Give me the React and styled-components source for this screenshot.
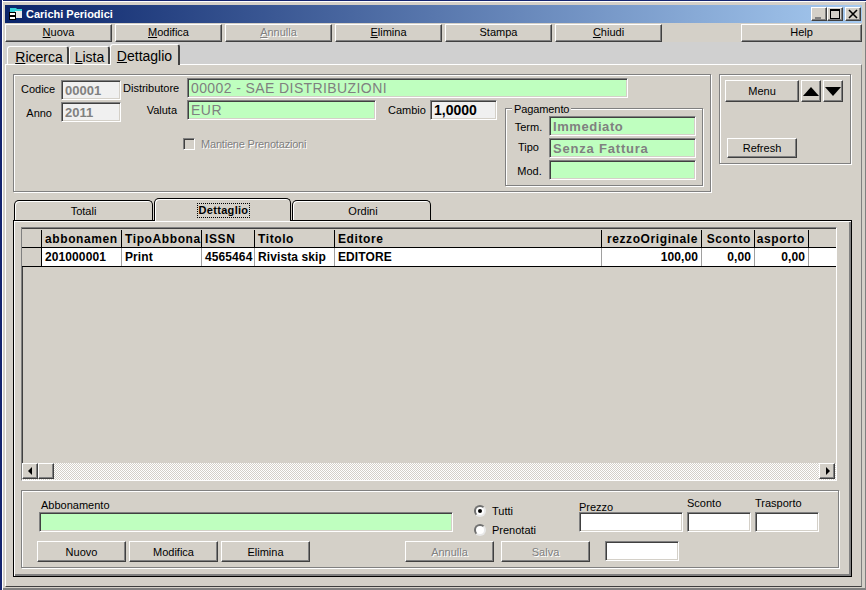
import React from "react";
import styled, { createGlobalStyle, css } from "styled-components";

const GlobalStyle = createGlobalStyle`
  html, body {
    margin: 0;
    padding: 0;
    overflow: hidden;
    background: #d4d0c8;
  }
  * {
    box-sizing: border-box;
  }
`;

const raised = css`
  border-style: solid;
  border-width: 1px;
  border-color: #fff #404040 #404040 #fff;
  box-shadow: inset -1px -1px 0 #808080;
  background: #d4d0c8;
`;

const etched = css`
  border: 1px solid #808080;
  box-shadow: inset 1px 1px 0 #fff, 1px 1px 0 #fff;
`;

const Frame = styled.div`
  width: 866px;
  height: 590px;
  padding: 5px 4px 3px 5px;
  background: #d4d0c8;
  font-family: "Liberation Sans", Arial, sans-serif;
  font-size: 11px;
  color: #000;
  box-shadow: inset 2px 0 0 #14246e, inset 3px 0 0 #fff, inset 0 1px 0 #14246e, inset 0 2px 0 #fff, inset -1px 0 0 #808080, inset 0 -2px 0 #808080;
  display: flex;
  flex-direction: column;
`;

const TitleBar = styled.div`
  height: 18px;
  flex: none;
  display: flex;
  align-items: center;
  padding: 0 1px 0 3px;
  background: linear-gradient(90deg, #0a246a, #a6caf0);
  color: #fff;
  font-weight: bold;
  font-size: 11px;
`;

const TitleText = styled.span`
  margin-left: 2px;
  font-size: 11px;
`;

const WinButtons = styled.div`
  margin-left: auto;
  display: flex;
`;

const WinButton = styled.div`
  ${raised}
  width: 16px;
  height: 14px;
  margin-left: ${(p) => p.$gap || 0}px;
  display: flex;
  align-items: center;
  justify-content: center;
`;

const Toolbar = styled.div`
  flex: none;
  height: 19px;
  padding-top: 1px;
  display: flex;
  gap: 3px;
`;

const ToolButton = styled.div`
  ${raised}
  width: ${(p) => p.$w || 107}px;
  height: 18px;
  padding-bottom: 2px;
  margin-left: ${(p) => p.$push || 0}px;
  display: flex;
  align-items: center;
  justify-content: center;
  ${(p) =>
    p.$off &&
    css`
      color: #808080;
      text-shadow: 1px 1px 0 #fff;
    `}
`;

const PageTabs = styled.div`
  flex: none;
  height: 22px;
  padding-left: 2px;
  background: #d0d0d0;
  display: flex;
  align-items: flex-end;
`;

const PageTab = styled.div`
  width: ${(p) => p.$w}px;
  height: ${(p) => (p.$on ? 21 : 18)}px;
  margin-bottom: ${(p) => (p.$on ? -1 : 0)}px;
  padding: 2px 0 0 ${(p) => p.$pl || 0}px;
  position: relative;
  background: #d4d0c8;
  font-size: 14px;
  border-top: 1px solid #fff;
  border-left: 1px solid #fff;
  border-right: 2px solid #404040;
  border-radius: 3px 3px 0 0;
  display: flex;
  align-items: center;
  justify-content: center;
`;

const Body = styled.div`
  flex: 1;
  border-style: solid;
  border-width: 1px;
  border-color: #fff #808080 #404040 #fff;
  padding: 9px 0 0 7px;
`;

const TopRow = styled.div`
  display: flex;
  align-items: flex-start;
  gap: 8px;
`;

const FilterBox = styled.div`
  ${etched}
  width: 698px;
  height: 118px;
  padding-left: 7px;
  display: flex;
  gap: 2px;
`;

const IdColumn = styled.div`
  width: 100px;
  margin-top: 5px;
  display: grid;
  grid-template-columns: 33px 60px;
  grid-auto-rows: 20px;
  column-gap: 7px;
  row-gap: 2px;
  align-content: start;
`;

const Caption = styled.label`
  width: ${(p) => (p.$w ? `${p.$w}px` : "auto")};
  margin-left: ${(p) => p.$ml || 0}px;
  padding-right: ${(p) => p.$pr || 0}px;
  margin-top: ${(p) => p.$drop || 0}px;
  margin-bottom: ${(p) => p.$lift || 0}px;
  text-align: ${(p) => p.$align || "left"};
  flex: none;
  line-height: 14px;
  align-self: center;
`;

const Sunken = styled.input`
  display: block;
  flex: none;
  width: ${(p) => (p.$w ? `${p.$w}px` : "100%")};
  height: 20px;
  margin: 0 0 0 ${(p) => p.$ml || 0}px;
  padding: 0 0 0 3px;
  outline: none;
  border-style: solid;
  border-width: 1px;
  border-color: #808080 #fff #fff #808080;
  box-shadow: inset 1px 1px 0 #404040, inset -1px -1px 0 #d4d0c8;
  background: ${(p) => (p.$tone === "green" ? "#bfffbf" : p.$tone === "grey" ? "#f0f0f0" : "#fff")};
  color: ${(p) => (p.$dark ? "#000" : "#808080")};
  font-family: "Liberation Sans", Arial, sans-serif;
  font-size: ${(p) => p.$size || 13}px;
  font-weight: ${(p) => (p.$plain ? "normal" : "bold")};
  letter-spacing: ${(p) => p.$ls || 0}px;
`;

const MainColumn = styled.div`
  flex: 1;
  padding-top: 3px;
`;

const FieldRow = styled.div`
  display: flex;
  height: 20px;
`;

const LowerRow = styled.div`
  display: flex;
  align-items: flex-start;
  margin-top: 2px;
`;

const LowerLeft = styled.div`
  width: 382px;
  flex: none;
`;

const CheckRow = styled.div`
  margin: 18px 0 0 60px;
  display: flex;
  align-items: center;
  gap: 6px;
  color: #808080;
  text-shadow: 1px 1px 0 #fff;
  letter-spacing: -0.2px;
`;

const CheckBox = styled.span`
  width: 12px;
  height: 12px;
  border-style: solid;
  border-width: 1px;
  border-color: #808080 #fff #fff #808080;
  box-shadow: inset 1px 1px 0 #404040;
`;

const PayBox = styled.div`
  ${etched}
  position: relative;
  width: 198px;
  height: 78px;
  margin-top: 8px;
  padding: 7px 0 0 0;
  display: grid;
  grid-template-columns: 43px 147px;
  grid-auto-rows: 20px;
  row-gap: 2px;
  align-content: start;
`;

const Legend = styled.span`
  position: absolute;
  top: -6px;
  left: 6px;
  padding: 0 2px;
  background: #d4d0c8;
  line-height: 13px;
  letter-spacing: -0.1px;
`;

const PayLabel = styled.label`
  padding-left: ${(p) => p.$pl ?? 2}px;
  margin-top: ${(p) => p.$drop || 0}px;
  margin-bottom: ${(p) => p.$lift || 0}px;
  text-align: center;
  align-self: center;
`;

const SideBox = styled.div`
  ${etched}
  width: 132px;
  height: 90px;
  padding: 5px 0 0 5px;
`;

const MenuRow = styled.div`
  display: flex;
  gap: 2px;
`;

const ActionButton = styled.div`
  ${raised}
  width: ${(p) => p.$w}px;
  height: ${(p) => p.$h || 20}px;
  margin-left: ${(p) => p.$ml || 0}px;
  margin-top: ${(p) => p.$mt || 0}px;
  flex: none;
  display: flex;
  align-items: center;
  justify-content: center;
  ${(p) =>
    p.$off &&
    css`
      color: #808080;
      text-shadow: 1px 1px 0 #fff;
    `}
`;

const SubTabs = styled.div`
  margin-top: 7px;
  height: 21px;
  padding-left: 1px;
  display: flex;
  align-items: flex-end;
`;

const SubTab = styled.div`
  width: ${(p) => p.$w}px;
  height: ${(p) => (p.$on ? 23 : 20)}px;
  margin-left: ${(p) => p.$ml || 0}px;
  margin-bottom: ${(p) => (p.$on ? -1 : 0)}px;
  padding-left: ${(p) => p.$pl || 0}px;
  position: relative;
  z-index: ${(p) => (p.$on ? 1 : 0)};
  background: #d4d0c8;
  border: 1px solid #000;
  border-bottom: none;
  border-radius: 5px 5px 0 0;
  box-shadow: inset 1px 1px 0 #fff;
  display: flex;
  align-items: center;
  justify-content: center;
  font-weight: ${(p) => (p.$on ? "bold" : "normal")};
`;

const FocusText = styled.span`
  border: 1px dotted #000;
  padding: 0 1px;
  line-height: 13px;
  letter-spacing: 0.3px;
`;

const SubPanel = styled.div`
  width: 839px;
  height: 357px;
  border: 1px solid #000;
  box-shadow: inset 1px 1px 0 #fff, inset -2px -2px 0 #808080;
  padding: 6px 0 0 7px;
`;

const DataGrid = styled.div`
  width: 816px;
  height: 254px;
  padding: 1px 0 0 0;
  border-style: solid;
  border-width: 1px;
  border-color: #808080 #fff #fff #808080;
  box-shadow: inset 1px 1px 0 #404040;
  display: flex;
  flex-direction: column;
`;

const GridRow = styled.div`
  flex: none;
  height: ${(p) => p.$h}px;
  display: flex;
  padding-top: ${(p) => (p.$head ? 1 : 0)}px;
  background: ${(p) => (p.$head ? "#d4d0c8" : "#fff")};
  border-bottom: 1px solid #000;
  font-size: 12px;
  font-weight: bold;
  letter-spacing: ${(p) => (p.$head ? 0.6 : 0.1)}px;
`;

const Cell = styled.div`
  flex: ${(p) => (p.$w ? `0 0 ${p.$w}px` : "1")};
  padding: 0 3px;
  overflow: hidden;
  white-space: nowrap;
  display: flex;
  align-items: center;
  justify-content: ${(p) => (p.$right ? "flex-end" : "flex-start")};
  border-right: ${(p) => (p.$last ? "none" : `1px solid ${p.$soft ? "#a0a0a0" : "#000"}`)};
  background: ${(p) => (p.$head ? "#d4d0c8" : "transparent")};
`;

const GridEmpty = styled.div`
  flex: 1;
`;

const ScrollBar = styled.div`
  flex: none;
  height: 17px;
  display: flex;
  background: repeating-conic-gradient(#d4d0c8 0 25%, #fff 0 50%) 0 0 / 2px 2px;
`;

const ScrollButton = styled.div`
  ${raised}
  flex: none;
  width: 16px;
  height: 16px;
  margin-left: ${(p) => (p.$end ? "auto" : 0)};
  margin-right: ${(p) => (p.$end ? "1px" : 0)};
  display: flex;
  align-items: center;
  justify-content: center;
`;

const EditBox = styled.div`
  ${etched}
  width: 818px;
  height: 78px;
  margin-top: 9px;
`;

const EditTop = styled.div`
  height: 41px;
  padding-top: 6px;
  display: flex;
  align-items: flex-end;
`;

const Stack = styled.div`
  width: ${(p) => p.$w}px;
  margin-left: ${(p) => p.$ml || 0}px;
  flex: none;
  display: flex;
  flex-direction: column;
`;

const StackLabel = styled.label`
  margin-left: ${(p) => p.$ml || 0}px;
  margin-bottom: ${(p) => p.$lift || 0}px;
  line-height: 13px;
  white-space: nowrap;
`;

const Radios = styled.div`
  align-self: flex-start;
  width: 105px;
  margin: 7px 0 0 21px;
  flex: none;
  display: flex;
  flex-direction: column;
  gap: 5px;
`;

const RadioRow = styled.div`
  display: flex;
  align-items: center;
  gap: 6px;
  height: 14px;
`;

const RadioDot = styled.span`
  width: 12px;
  height: 12px;
  border-radius: 50%;
  background: #fff;
  border-style: solid;
  border-width: 2px;
  border-color: #707070 #e8e8e8 #e8e8e8 #707070;
  display: flex;
  align-items: center;
  justify-content: center;
  &::after {
    content: "";
    width: 4px;
    height: 4px;
    border-radius: 50%;
    background: ${(p) => (p.$on ? "#000" : "transparent")};
  }
`;

const EditButtons = styled.div`
  margin-top: 9px;
  padding-left: 15px;
  display: flex;
  align-items: flex-start;
  gap: 3px;
`;

const Triangle = ({ up }) => (
  <svg width="16" height="9" viewBox="0 0 16 9">
    <path d={up ? "M8 0 16 9H0Z" : "M0 0H16L8 9Z"} fill="#000" />
  </svg>
);

const SmallArrow = ({ left }) => (
  <svg width="5" height="8" viewBox="0 0 5 8">
    <path d={left ? "M4 0V8L0 4Z" : "M1 0V8L5 4Z"} fill="#000" />
  </svg>
);

const AppIcon = () => (
  <svg width="16" height="16" viewBox="0 0 16 16">
    <path d="M2 2h6l1 1h5v3H2Z" fill="#35d0d8" />
    <path d="M7 5h7v7H7Z" fill="#e8e8e8" />
    <path d="M1 6h7v8H1Z" fill="#000" />
    <path d="M2 7h5v2H2ZM2 11h5v2H2Z" fill="#fff" />
  </svg>
);

const columns = [
  { w: 80, head: "abbonamen", value: "201000001" },
  { w: 80, head: "TipoAbbona", value: "Print" },
  { w: 53, head: "ISSN", value: "4565464" },
  { w: 80, head: "Titolo", value: "Rivista skip" },
  { w: 267, head: "Editore", value: "EDITORE" },
  { w: 100, head: "rezzoOriginale", value: "100,00", right: true },
  { w: 53, head: "Sconto", value: "0,00", right: true },
  { w: 54, head: "asporto", value: "0,00", right: true },
];

export default function App() {
  return (
    <Frame>
      <GlobalStyle />
      <TitleBar>
        <AppIcon />
        <TitleText>Carichi Periodici</TitleText>
        <WinButtons>
          <WinButton>
            <svg width="10" height="10" viewBox="0 0 10 10">
              <path d="M1 8h6v2H1Z" fill="#808080" />
            </svg>
          </WinButton>
          <WinButton>
            <svg width="10" height="10" viewBox="0 0 10 10">
              <path d="M0 0h10v10H0ZM1 2v7h8V2Z" fill="#000" fillRule="evenodd" />
            </svg>
          </WinButton>
          <WinButton $gap={2}>
            <svg width="10" height="10" viewBox="0 0 10 10">
              <path d="M1 1 9 9M9 1 1 9" stroke="#000" strokeWidth="1.6" />
            </svg>
          </WinButton>
        </WinButtons>
      </TitleBar>

      <Toolbar>
        <ToolButton><span><u>N</u>uova</span></ToolButton>
        <ToolButton><span><u>M</u>odifica</span></ToolButton>
        <ToolButton $off><span><u>A</u>nnulla</span></ToolButton>
        <ToolButton><span><u>E</u>limina</span></ToolButton>
        <ToolButton>Stampa</ToolButton>
        <ToolButton><span><u>C</u>hiudi</span></ToolButton>
        <ToolButton $w={121} $push={76}>Help</ToolButton>
      </Toolbar>

      <PageTabs>
        <PageTab $w={62} $pl={3}><span><u>R</u>icerca</span></PageTab>
        <PageTab $w={41} $pl={1}><span><u>L</u>ista</span></PageTab>
        <PageTab $w={70} $on><span><u>D</u>ettaglio</span></PageTab>
      </PageTabs>

      <Body>
        <TopRow>
          <FilterBox>
            <IdColumn>
              <Caption $align="right" $lift={2}>Codice</Caption>
              <Sunken readOnly value="00001" $tone="grey" />
              <Caption $align="right" $pr={2} $drop={2}>Anno</Caption>
              <Sunken readOnly value="2011" $tone="grey" />
            </IdColumn>
            <MainColumn>
              <FieldRow>
                <Caption $w={54}>Distributore</Caption>
                <Sunken readOnly value="00002 - SAE DISTRIBUZIONI" $tone="green" $w={441} $ml={10} $size={14} $plain $ls={0.4} />
              </FieldRow>
              <LowerRow>
                <LowerLeft>
                  <FieldRow>
                    <Caption $w={54} $align="right">Valuta</Caption>
                    <Sunken readOnly value="EUR" $tone="green" $w={189} $ml={10} $size={14} $plain $ls={0.5} />
                    <Caption $ml={12} $w={35}>Cambio</Caption>
                    <Sunken readOnly value="1,0000" $tone="grey" $dark $w={67} $ml={7} $size={14} />
                  </FieldRow>
                  <CheckRow>
                    <CheckBox />
                    <span>Mantiene Prenotazioni</span>
                  </CheckRow>
                </LowerLeft>
                <PayBox>
                  <Legend>Pagamento</Legend>
                  <PayLabel $drop={2}>Term.</PayLabel>
                  <Sunken readOnly value="Immediato" $tone="green" $ls={0.6} />
                  <PayLabel $lift={2}>Tipo</PayLabel>
                  <Sunken readOnly value="Senza Fattura" $tone="green" $ls={0.8} />
                  <PayLabel $drop={2} $pl={4}>Mod.</PayLabel>
                  <Sunken readOnly value="" $tone="green" />
                </PayBox>
              </LowerRow>
            </MainColumn>
          </FilterBox>

          <SideBox>
            <MenuRow>
              <ActionButton $w={74} $h={22}>Menu</ActionButton>
              <ActionButton $w={20} $h={22}><Triangle up /></ActionButton>
              <ActionButton $w={20} $h={22}><Triangle /></ActionButton>
            </MenuRow>
            <ActionButton $w={70} $ml={2} $mt={36}>Refresh</ActionButton>
          </SideBox>
        </TopRow>

        <SubTabs>
          <SubTab $w={139}>Totali</SubTab>
          <SubTab $w={137} $ml={1} $pl={2} $on><FocusText>Dettaglio</FocusText></SubTab>
          <SubTab $w={139} $ml={1} $pl={3}>Ordini</SubTab>
        </SubTabs>

        <SubPanel>
          <DataGrid>
            <GridRow $h={19} $head>
              <Cell $w={20} />
              {columns.map((c) => (
                <Cell key={c.head} $w={c.w} $right={c.right}>{c.head}</Cell>
              ))}
              <Cell $last />
            </GridRow>
            <GridRow $h={19}>
              <Cell $w={20} $head />
              {columns.map((c) => (
                <Cell key={c.head} $w={c.w} $right={c.right} $soft>{c.value}</Cell>
              ))}
              <Cell $last />
            </GridRow>
            <GridEmpty />
            <ScrollBar>
              <ScrollButton><SmallArrow left /></ScrollButton>
              <ScrollButton />
              <ScrollButton $end><SmallArrow /></ScrollButton>
            </ScrollBar>
          </DataGrid>

          <EditBox>
            <EditTop>
              <Stack $w={414} $ml={17}>
                <StackLabel $ml={2}>Abbonamento</StackLabel>
                <Sunken readOnly value="" $tone="green" />
              </Stack>
              <Radios>
                <RadioRow>
                  <RadioDot $on />
                  <span>Tutti</span>
                </RadioRow>
                <RadioRow>
                  <RadioDot />
                  <span>Prenotati</span>
                </RadioRow>
              </Radios>
              <Stack $w={104}>
                <StackLabel $lift={-2}>Prezzo</StackLabel>
                <Sunken readOnly value="" />
              </Stack>
              <Stack $w={64} $ml={4}>
                <StackLabel $lift={2}>Sconto</StackLabel>
                <Sunken readOnly value="" />
              </Stack>
              <Stack $w={64} $ml={4}>
                <StackLabel $lift={2}>Trasporto</StackLabel>
                <Sunken readOnly value="" />
              </Stack>
            </EditTop>
            <EditButtons>
              <ActionButton $w={89} $h={21}>Nuovo</ActionButton>
              <ActionButton $w={89} $h={21}>Modifica</ActionButton>
              <ActionButton $w={89} $h={21}>Elimina</ActionButton>
              <ActionButton $w={89} $h={21} $ml={92} $off>Annulla</ActionButton>
              <ActionButton $w={89} $h={21} $ml={4} $off>Salva</ActionButton>
              <Sunken readOnly value="" $w={74} $ml={12} />
            </EditButtons>
          </EditBox>
        </SubPanel>
      </Body>
    </Frame>
  );
}
